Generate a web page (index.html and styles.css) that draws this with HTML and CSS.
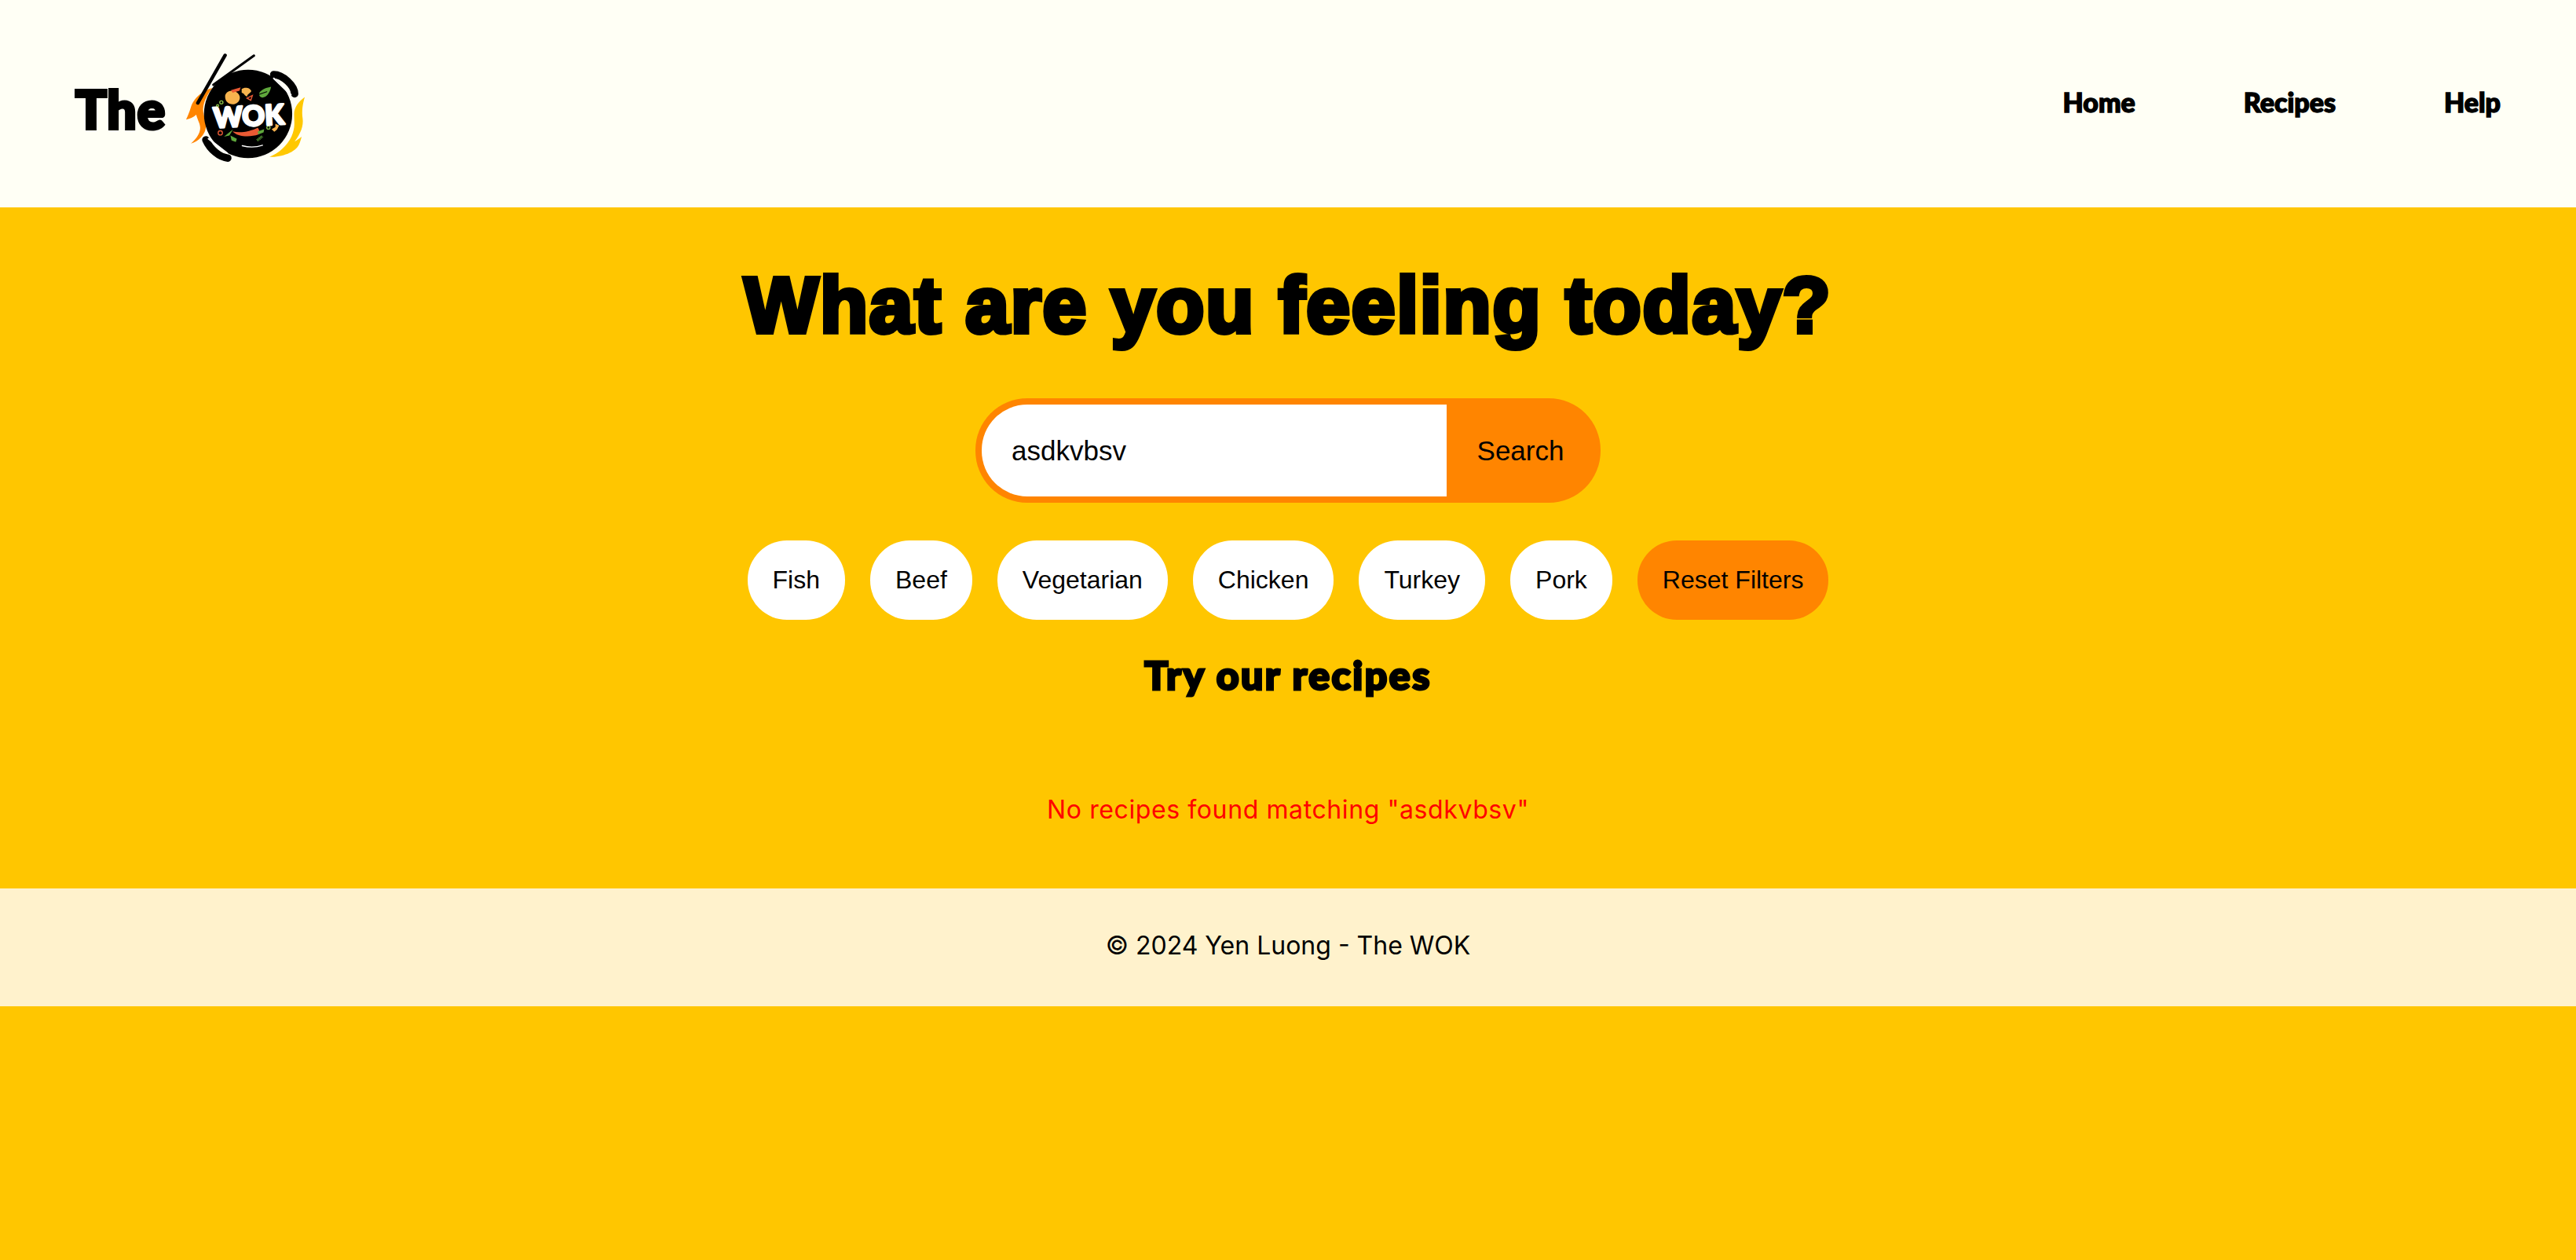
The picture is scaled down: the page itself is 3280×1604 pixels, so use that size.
FILE: index.html
```html
<!DOCTYPE html>
<html lang="en">
<head>
<meta charset="utf-8">
<title>The WOK</title>
<link rel="stylesheet" href="styles.css">
</head>
<body>
<header class="site-header">
  <a class="brand" href="#">
    <span class="brand-the">The</span>
    <svg class="brand-logo" viewBox="530 80 460 420" aria-hidden="true">
      <path fill="#ff8500" d="M636 218C596 230 566 258 556 290C550 310 544 324 538 336C552 334 566 328 576 318C582 342 594 354 590 376C586 396 572 412 556 426C584 418 610 392 612 364C614 338 600 318 602 294C604 266 620 240 636 218Z"/>
      <path fill="#ffc800" d="M982 252C960 268 942 290 942 316C942 344 948 366 932 400C916 434 884 462 850 476C900 476 946 458 960 430C966 418 968 408 970 400C960 408 952 414 944 418C966 390 978 360 974 332C970 304 974 278 982 252Z"/>
      <circle cx="770" cy="315" r="165" fill="#000"/>
      <path class="stick-a" d="M684 96L582 274"/>
      <path class="stick-b" d="M792 97L640 206"/>
      <path class="handle" d="M866 168C900 168 944 210 944 240"/>
      <path class="handle" d="M612 412C628 448 664 478 694 480"/>
      <path class="handle-line" d="M866 182L930 244"/>
      <path class="handle-line" d="M622 408L692 462"/>
      <path class="rim" d="M748 434C772 440 800 440 824 432"/>
      <path fill="#f7b34e" d="M684 250C684 232 706 222 724 232C746 244 744 270 720 278C700 282 684 270 684 250Z"/>
      <path fill="#ea5a34" d="M706 226L742 216L738 228L712 236Z"/>
      <path fill="#f7b34e" d="M746 222C756 214 778 216 782 230C776 240 768 240 766 250C758 250 756 238 746 236Z"/>
      <path fill="#5fa83c" d="M856 214C830 218 806 232 812 246C820 262 848 254 856 214Z"/>
      <path class="food-line" d="M792 238L806 234M800 246L840 232"/>
      <path class="ring-red" d="M766 256L786 246L780 264Z"/>
      <circle class="ring-green" cx="670" cy="272" r="6"/>
      <circle class="ring-green" cx="656" cy="284" r="4"/>
      <path fill="#ea5a34" d="M712 380C740 388 780 380 806 366C812 374 816 386 808 392C780 402 730 402 712 380Z"/>
      <path fill="#5fa83c" d="M806 380L830 372L828 384L808 392Z"/>
      <path fill="#5fa83c" d="M680 400L714 372L700 396ZM704 396L728 408L724 420L708 414Z"/>
      <circle class="ring-red" cx="666" cy="386" r="8"/>
      <circle class="ring-green" cx="846" cy="366" r="6"/>
      <path fill="#f7b34e" d="M858 372L872 364L872 352L886 358L878 374L868 382Z"/>
      <path class="food-green" d="M804 414L824 398"/>
      <text class="wok-word" x="772" y="360" transform="rotate(-3 772 320)">WOK</text>
    </svg>
  </a>
  <nav class="site-nav">
    <a href="#">Home</a>
    <a href="#">Recipes</a>
    <a href="#">Help</a>
  </nav>
</header>
<main class="hero">
  <h1>What are you feeling today?</h1>
  <form class="search">
    <input class="search-input" type="text" value="asdkvbsv">
    <button class="search-button" type="button">Search</button>
  </form>
  <div class="filters">
    <button class="chip" type="button">Fish</button>
    <button class="chip" type="button">Beef</button>
    <button class="chip" type="button">Vegetarian</button>
    <button class="chip" type="button">Chicken</button>
    <button class="chip" type="button">Turkey</button>
    <button class="chip" type="button">Pork</button>
    <button class="chip chip-reset" type="button">Reset Filters</button>
  </div>
  <h2>Try our recipes</h2>
  <p class="empty">No recipes found matching "asdkvbsv"</p>
</main>
<footer class="site-footer">© 2024 Yen Luong - The WOK</footer>
</body>
</html>
```

FILE: styles.css
```css
* { box-sizing: border-box; }
html, body { margin: 0; }
body {
  min-height: 1604px;
  background: #ffc600;
  color: #000;
  font-family: "Liberation Sans", Arial, sans-serif;
}
a { color: inherit; text-decoration: none; }

.site-header {
  height: 264px;
  background: #fffff5;
  display: flex;
  align-items: center;
  justify-content: space-between;
  padding: 0 96px;
}
.brand { display: flex; align-items: center; gap: 23px; margin-top: 9px; }
.brand-the {
  font: 900 66px/1 "Lato", sans-serif;
  -webkit-text-stroke: 4px #000;
  letter-spacing: 1px;
  padding-top: 4px;
}
.brand-logo { display: block; width: 157px; height: 143px; }
.stick-a, .stick-b, .handle, .handle-line, .rim, .food-line, .food-green {
  fill: none;
  stroke-linecap: round;
}
.stick-a { stroke: #000; stroke-width: 13; }
.stick-b { stroke: #000; stroke-width: 9; }
.handle { stroke: #000; stroke-width: 28; }
.handle-line { stroke: #fff; stroke-width: 6; }
.rim { stroke: #fff; stroke-width: 4; }
.food-line { stroke: #000; stroke-width: 3; }
.food-green { stroke: #5fa83c; stroke-width: 10; stroke-dasharray: 3 2; stroke-linecap: butt; }
.ring-red { fill: none; stroke: #ea5a34; stroke-width: 4; }
.ring-green { fill: none; stroke: #8bc34a; stroke-width: 4; }
.wok-word {
  font: 900 104px "Lato", sans-serif;
  fill: #fff;
  stroke: #fff;
  stroke-width: 8;
  stroke-linejoin: round;
  text-anchor: middle;
}

.site-nav { display: flex; gap: 138px; margin-top: -5px; }
.site-nav a {
  font: 900 34px/1 "Lato", sans-serif;
  -webkit-text-stroke: 1.5px #000;
}

.hero { display: flex; flex-direction: column; align-items: center; height: 867px; }
h1 {
  margin: 64px 0 0;
  font: 900 100px/120px "Liberation Sans", sans-serif;
  -webkit-text-stroke: 6px #000;
  letter-spacing: 1.9px;
}
.search { display: flex; height: 133px; margin-top: 59px; width: 796px; }
.search-input {
  flex: 1;
  min-width: 0;
  border: 8px solid #ff8500;
  border-right: 0;
  border-radius: 66px 0 0 66px;
  background: #fff;
  padding: 0 0 0 38px;
  font: 35px "Liberation Sans", sans-serif;
  color: #000;
  outline: 0;
}
.search-button {
  width: 196px;
  border: 0;
  border-radius: 0 66px 66px 0;
  background: #ff8500;
  padding: 0 8px 0 0;
  font: 35px "Liberation Sans", sans-serif;
  color: #000;
}
.filters { display: flex; gap: 32px; margin-top: 48px; }
.chip {
  height: 101px;
  padding: 0 32px;
  border: 0;
  border-radius: 50px;
  background: #fff;
  font: 32px "Liberation Sans", sans-serif;
  color: #000;
}
.chip-reset { background: #ff8500; }
h2 {
  margin: 40px 0 0;
  font: 900 50px/60px "Lato", sans-serif;
  -webkit-text-stroke: 3px #000;
  letter-spacing: 2.5px;
}
.empty {
  margin: 118px 0 0;
  font: 32px/48px "Inter", sans-serif;
  letter-spacing: 0.6px;
  color: #ff0000;
}
.site-footer {
  height: 150px;
  padding-bottom: 6px;
  background: #fff2cc;
  display: flex;
  align-items: center;
  justify-content: center;
  font: 32px "Inter", sans-serif;
  color: #000;
}
```
